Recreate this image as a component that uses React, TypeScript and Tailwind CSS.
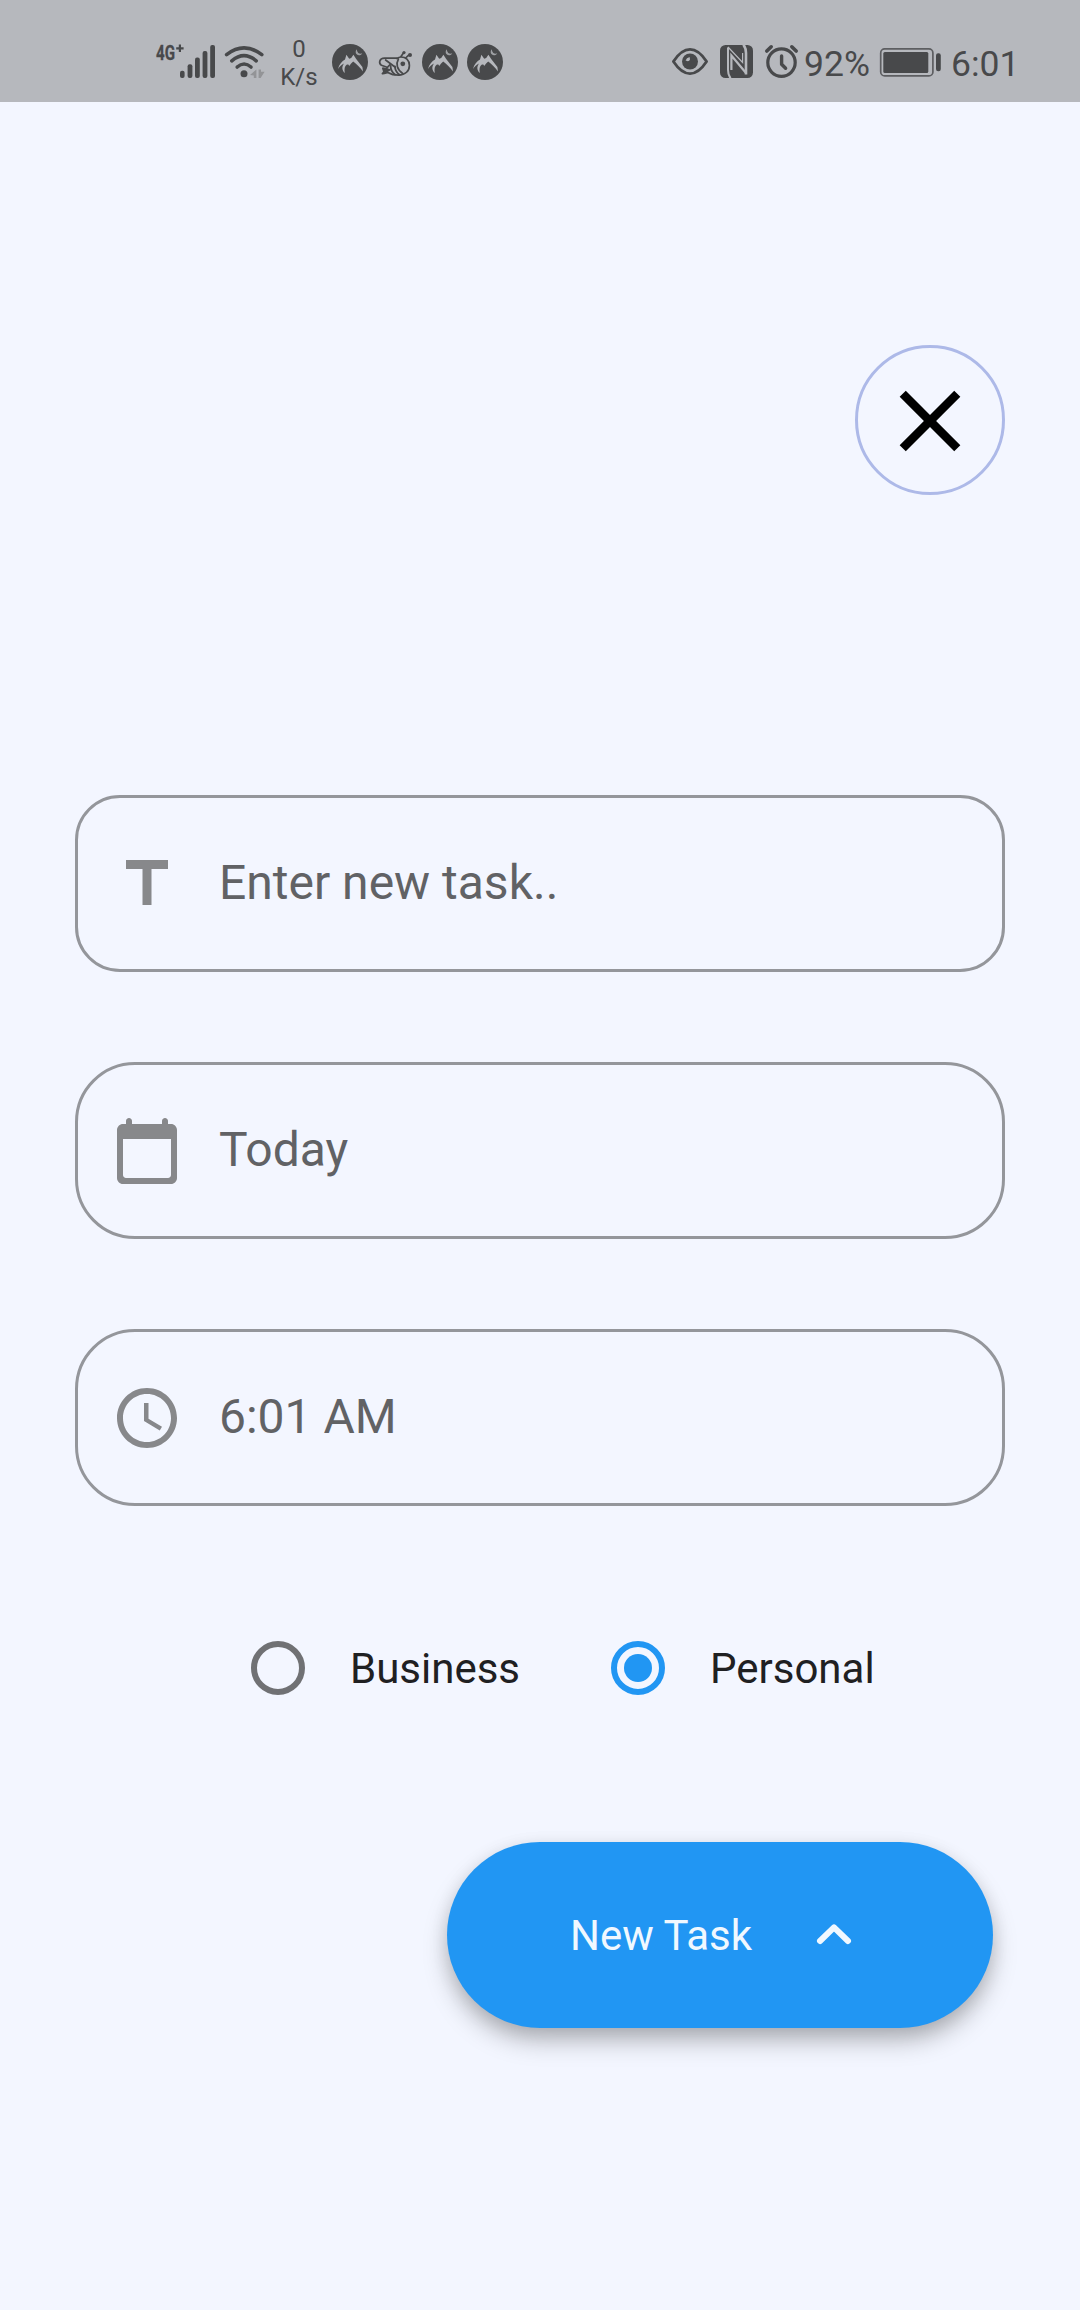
import React from 'react';

const INK = '#48494b';

function MountainBadge({ className }: { className: string }) {
  return (
    <svg viewBox="0 0 36 36" className={`h-9 w-9 shrink-0 ${className}`}>
      <circle cx="18" cy="18" r="18" fill={INK} />
      <path
        d="M6 25C7 20.5 10 17.4 13 15.6L14.4 10.8L17.2 14.8L19.2 14L21.4 10.8L24.2 15L30.4 23L31 27.4C28.4 24 25 20.6 21.2 17.6C19.8 18.8 18.4 20.2 17.2 22C16.8 20.4 16 20 14.6 20.8C12.8 22 12 25 12.8 29C9.8 25.8 9.6 22.8 12 19.4C9.6 20.4 7.6 22.4 6 25Z"
        fill="#b6b8bd"
      />
      <path d="M25 5.2A3.4 3.4 0 1 0 30.2 9.2A3.6 3.6 0 0 1 25 5.2Z" fill="#9fa1a5" />
    </svg>
  );
}

function StatusBar() {
  return (
    <header className="flex h-[102px] w-full items-start bg-[#b6b8bd] text-[#48494b]">
      <svg viewBox="150 34 66 45" className="mt-[34px] ml-[150px] h-[45px] w-[66px] shrink-0" fill={INK}>
        <text x="156" y="60" fontFamily="Roboto" fontWeight="700" fontSize="21" textLength="19" lengthAdjust="spacingAndGlyphs" stroke={INK} strokeWidth="0.3">4G</text>
        <path d="M178.8 44.6h2.2v2.6h2.6v2.2H181v2.6h-2.2v-2.6h-2.6v-2.2h2.6z" />
        <rect x="180" y="70.7" width="4.6" height="7.3" rx="2" />
        <rect x="187.6" y="64.3" width="4.8" height="13.7" rx="2" />
        <rect x="195" y="57.6" width="4.8" height="20.4" rx="2" />
        <rect x="202.6" y="51" width="4.8" height="27" rx="2" />
        <rect x="210.2" y="45" width="4.8" height="33" rx="2" />
      </svg>
      <svg viewBox="224 44 42 35" className="mt-[44px] ml-[8px] h-[35px] w-[42px] shrink-0" fill="none" stroke={INK} strokeWidth="3.6" strokeLinecap="round">
        <path d="M226.6 54.6Q244 41 261.8 54.6" />
        <path d="M231.8 60.8Q244 50.6 256.2 60.8" />
        <path d="M237.2 67Q244 61 251 67" />
        <circle cx="244" cy="73.7" r="3.5" fill={INK} stroke="none" />
        <path d="M256.4 69.4V78H253.8V75.6L250 75Z M258.6 69.4H261V71.8H264.6L260.6 78H258.6Z" fill="#939497" stroke="none" />
      </svg>
      <div className="mt-[35px] ml-[13px] w-[40px] shrink-0 text-center text-[24px] leading-[28px]">
        <div>0</div>
        <div>K/s</div>
      </div>
      <MountainBadge className="mt-[44px] ml-[13px]" />
      <svg viewBox="378 50 36 28" className="mt-[50px] ml-[10px] h-[28px] w-[36px] shrink-0" fill="none" stroke={INK} strokeWidth="1.7" strokeLinecap="round" strokeLinejoin="round">
        <path d="M397 58.2H384.5C379 58.2 378.6 63.6 381.4 65.2L386.4 67" />
        <path d="M385.6 60L394.6 66.8" />
        <path d="M390 64.6C386.6 67.6 384.6 71.4 382.4 73.6C385.4 73.8 386.8 72.2 388.4 72.8C391.6 74.8 395 75.2 398.6 75.2C405.4 75 409.4 70.8 409.4 65.4C409.4 59.8 405.8 56.8 400.6 57C398.8 57.2 397.6 57.8 397 58.6" />
        <path d="M382.8 68.2L389.8 69.8L384.4 73Z" fill={INK} />
        <path d="M390.6 66C390.6 69.4 392 72.4 395 74.6M395 66.4C395 69.4 396.6 72.4 399.4 74.8" strokeWidth="1.8" />
        <path d="M398.4 59C395.6 64 397 70 403 73.8" />
        <path d="M401 56.6L403.6 52.8M405.6 58L408.4 55.4" />
        <circle cx="404" cy="52.6" r="1.6" fill={INK} stroke="none" />
        <circle cx="410" cy="55" r="2" fill={INK} stroke="none" />
        <circle cx="402.8" cy="63.8" r="2.4" fill={INK} stroke="none" />
      </svg>
      <MountainBadge className="mt-[44px] ml-[8px]" />
      <MountainBadge className="mt-[44px] ml-[9px]" />

      <svg viewBox="671 47 38 29" className="mt-[47px] ml-[168px] h-[29px] w-[38px] shrink-0">
        <path d="M673.4 61.5C679 53 684 49.4 690 49.4S701 53 706.6 61.5C701 70 696 73.6 690 73.6S679 70 673.4 61.5Z" fill="none" stroke={INK} strokeWidth="2.8" strokeLinejoin="round" />
        <circle cx="690" cy="61.5" r="8" fill={INK} />
        <path d="M685.6 60.6A5 5 0 0 1 689.6 57L690 59.4A3 3 0 0 1 687.8 61.2Z" fill="#b6b8bd" />
      </svg>
      <svg viewBox="720 45 33 33" className="mt-[45px] ml-[11px] h-[33px] w-[33px] shrink-0">
        <rect x="720" y="45" width="33" height="33" rx="5.5" fill={INK} />
        <path d="M730.6 78.4Q728 75 728 70V47.5" fill="none" stroke="#b6b8bd" strokeWidth="2" />
        <path d="M746 74.5V53Q746 48 743.4 44.6" fill="none" stroke="#b6b8bd" strokeWidth="2.6" />
        <path d="M731.4 70V55.5L746 73" fill="none" stroke="#b6b8bd" strokeWidth="2.2" />
        <path d="M728 47L742.6 62.5V53" fill="none" stroke="#b6b8bd" strokeWidth="1.2" />
      </svg>
      <svg viewBox="764 44 35 35" className="mt-[44px] ml-[11px] h-[35px] w-[35px] shrink-0" fill="none" stroke={INK} strokeWidth="3.2" strokeLinecap="round" strokeLinejoin="round">
        <circle cx="781.5" cy="62.6" r="13.7" />
        <path d="M781.6 56V64.2L785.6 68.2" strokeWidth="3.4" />
        <path d="M766.8 51L771.2 46.8M796.2 51L791.8 46.8" strokeWidth="3.6" />
      </svg>
      <div className="mt-[43px] ml-[5px] w-[66px] shrink-0 text-[35.5px] leading-[42px] whitespace-nowrap">92%</div>
      <svg viewBox="879 47 63 31" className="mt-[47px] ml-[9px] h-[31px] w-[63px] shrink-0">
        <rect x="880.7" y="48.9" width="52.2" height="27" rx="4" fill="none" stroke="#5d5e61" strokeWidth="1.7" />
        <rect x="883.3" y="52" width="45" height="21" rx="1.5" fill={INK} />
        <rect x="936" y="53.3" width="4.8" height="18" rx="2.2" fill={INK} />
      </svg>
      <div className="mt-[43px] ml-[9px] shrink-0 text-[35.5px] leading-[42px] whitespace-nowrap">6:01</div>
    </header>
  );
}

function Field({ icon, text, radius }: { icon: React.ReactNode; text: string; radius: string }) {
  return (
    <div className={`flex h-[177px] w-full items-center border-[3px] border-[#94969b] pl-[33px] ${radius}`}>
      {icon}
      <span className="-mt-[2px] ml-9 text-[48px] leading-[56px] whitespace-nowrap text-[#616265]">{text}</span>
    </div>
  );
}

function Radio({ label, checked, className = '' }: { label: string; checked?: boolean; className?: string }) {
  return (
    <div className={`flex items-center ${className}`}>
      <span className={`flex size-[54px] items-center justify-center rounded-full border-[6px] ${checked ? 'border-[#2196f3]' : 'border-[#707174]'}`}>
        {checked && <span className="size-[28px] rounded-full bg-[#2196f3]" />}
      </span>
      <span className="mt-[2px] ml-[45px] text-[42px] leading-[50px] whitespace-nowrap text-[#1f2022]">{label}</span>
    </div>
  );
}

export default function App() {
  const iconClass = 'size-[72px] shrink-0 fill-[#87888b]';
  return (
    <div className="flex h-[2310px] w-[1080px] flex-col overflow-hidden bg-[#f3f6ff] font-[Roboto,sans-serif]">
      <StatusBar />
      <main className="flex flex-col px-[75px] pt-[243px]">
        <button aria-label="Close" className="flex size-[150px] items-center justify-center self-end rounded-full border-[3px] border-[#adb9e8]">
          <svg viewBox="0 0 24 24" className="mt-px size-[104px] shrink-0 fill-black">
            <path d="M19 6.41L17.59 5 12 10.59 6.41 5 5 6.41 10.59 12 5 17.59 6.41 19 12 13.41 17.59 19 19 17.59 13.41 12z" />
          </svg>
        </button>

        <div className="mt-[300px] flex flex-col gap-[90px]">
          <Field
            text="Enter new task.."
            radius="rounded-[45px]"
            icon={
              <svg viewBox="0 0 24 24" className={iconClass}>
                <path d="M5 4v3h5.5v12h3V7H19V4z" />
              </svg>
            }
          />
          <Field
            text="Today"
            radius="rounded-[60px]"
            icon={
              <svg viewBox="0 0 24 24" className={iconClass}>
                <path d="M20 3h-1V2c0-.55-.45-1-1-1s-1 .45-1 1v1H7V2c0-.55-.45-1-1-1s-1 .45-1 1v1H4c-1.1 0-2 .9-2 2v16c0 1.1.9 2 2 2h16c1.1 0 2-.9 2-2V5c0-1.1-.9-2-2-2zm-1 18H5c-.55 0-1-.45-1-1V8h16v12c0 .55-.45 1-1 1z" />
              </svg>
            }
          />
          <Field
            text="6:01 AM"
            radius="rounded-[60px]"
            icon={
              <svg viewBox="0 0 24 24" className={iconClass}>
                <path d="M11.99 2C6.47 2 2 6.48 2 12s4.47 10 9.99 10C17.52 22 22 17.52 22 12S17.52 2 11.99 2zM12 20c-4.42 0-8-3.58-8-8s3.58-8 8-8 8 3.58 8 8-3.58 8-8 8zm.5-13H11v6l5.25 3.15.75-1.23-4.5-2.67z" />
              </svg>
            }
          />
        </div>

        <div className="mt-[135px] ml-[176px] flex h-[54px] items-center">
          <Radio label="Business" className="w-[360px]" />
          <Radio label="Personal" checked />
        </div>

        <button className="mt-[147px] mr-[12px] flex h-[186px] w-[546px] items-center self-end rounded-[93px] bg-[#2196f3] pl-[123px] shadow-[0_14px_26px_-2px_rgba(0,0,0,0.27),0_4px_18px_rgba(0,0,0,0.09)]">
          <span className="mt-[2px] text-[42px] leading-[50px] whitespace-nowrap text-[#f0f8ff]">New Task</span>
          <svg viewBox="0 0 36 22" className="-mt-[2px] ml-[64px] h-[22px] w-[36px] shrink-0" fill="none" stroke="#f0f8ff" strokeWidth="6" strokeLinecap="round" strokeLinejoin="round">
            <path d="M4 18L18 4.4L32 18" />
          </svg>
        </button>
      </main>
    </div>
  );
}
